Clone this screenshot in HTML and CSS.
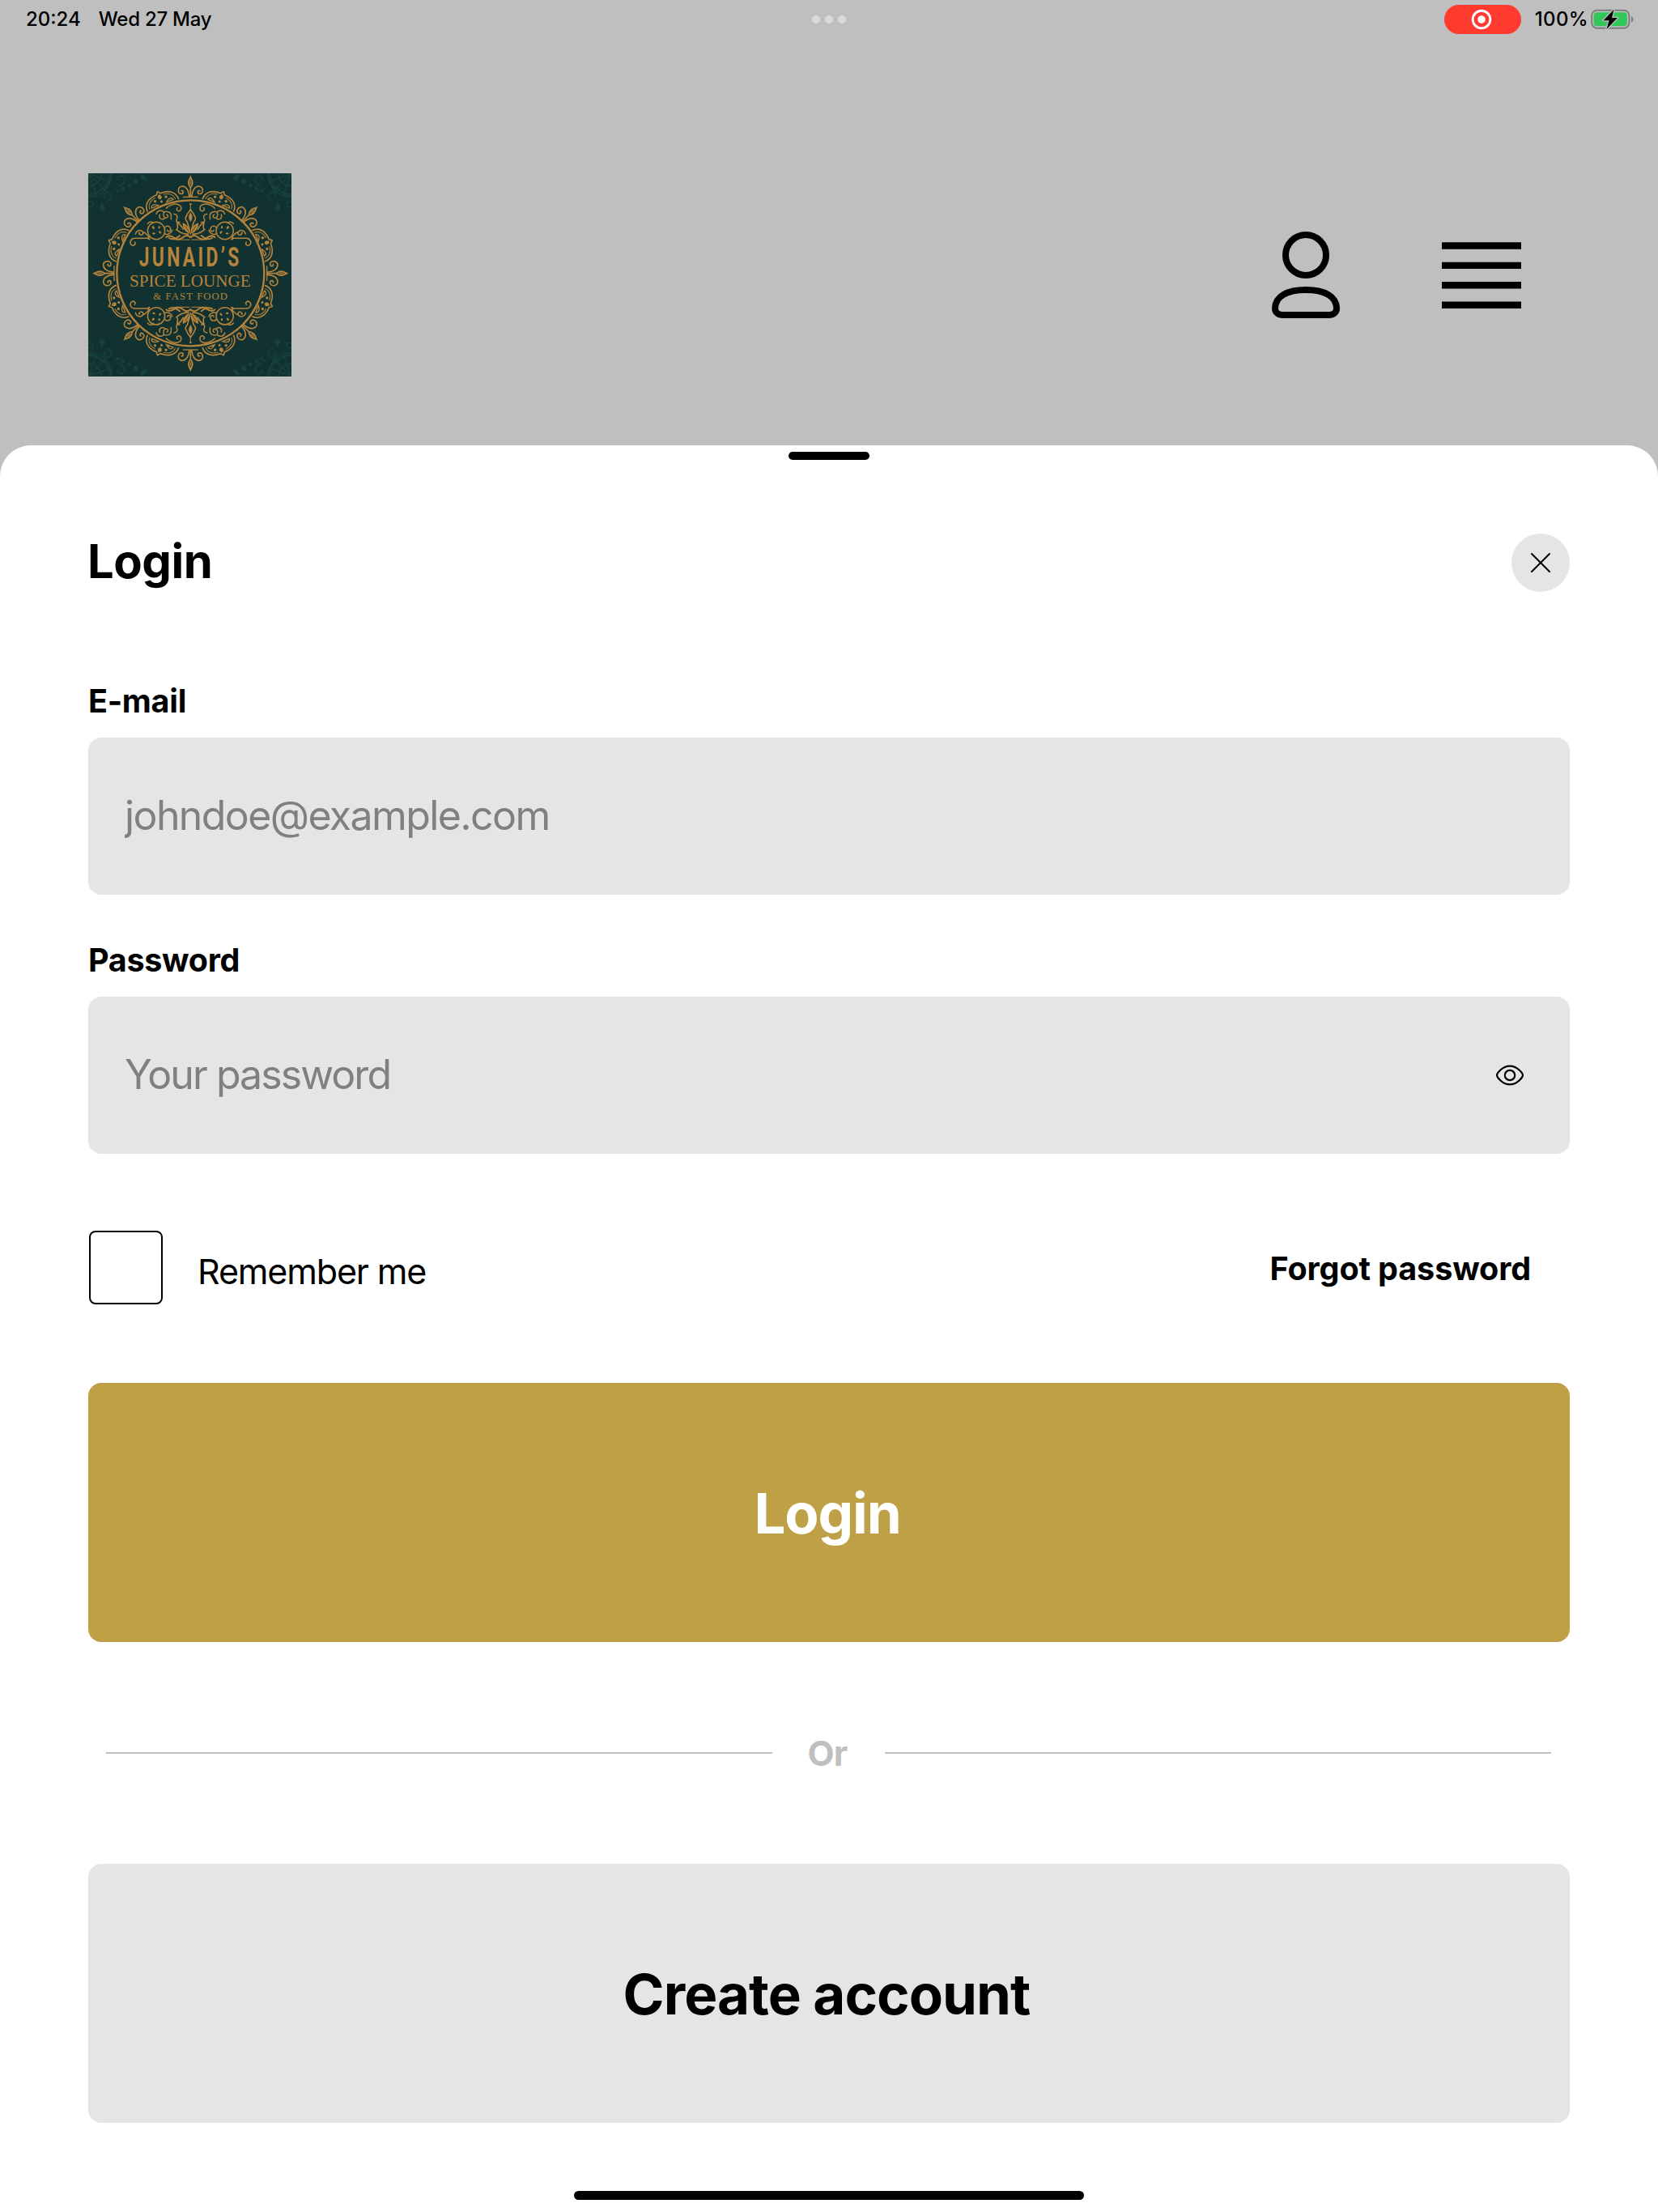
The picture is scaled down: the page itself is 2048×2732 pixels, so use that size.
FILE: index.html
```html
<!DOCTYPE html>
<html lang="en">
<head>
<meta charset="utf-8">
<title>Login</title>
<link rel="stylesheet" href="styles.css">
</head>
<body>
<div class="screen">
  <div class="status-bar">
    <div class="status-left">
      <span class="time">20:24</span>
      <span class="date">Wed 27 May</span>
    </div>
    <div class="multitask"><i></i><i></i><i></i></div>
    <div class="status-right">
      <div class="recording">
        <svg width="26" height="26" viewBox="0 0 26 26"><circle cx="13" cy="13" r="10.8" fill="none" stroke="#fff" stroke-width="2.9"/><circle cx="13" cy="13" r="4.8" fill="#fff"/></svg>
      </div>
      <span class="charge">100%</span>
      <svg class="battery" width="54" height="26" viewBox="0 0 54 26">
        <rect x="1.2" y="1.7" width="46.2" height="22" rx="6.5" fill="none" stroke="#7d7d7d" stroke-width="2"/>
        <rect x="3.7" y="4.2" width="41.2" height="17" rx="4" fill="#33c759"/>
        <path d="M50 9.2C53.4 10.2 53.4 15.4 50 16.4Z" fill="#7d7d7d"/>
        <path d="M28.5 .8L15.6 14.2H22.6L19.4 25L33 11H26Z" fill="#000" stroke="#bfbfbf" stroke-width="2.6" paint-order="stroke" stroke-linejoin="round"/>
      </svg>
    </div>
  </div>

  <header class="app-bar">
    <svg class="logo" viewBox="27 27 753 753">
      <defs>
        <g id="fleur">
          <path d="M406 34C410 46 416 52 416 62C416 72 410 78 406 86C402 78 396 72 396 62C396 52 402 46 406 34Z" fill="#b5833c"/>
          <path d="M406 50C410 58 410 66 406 75C402 66 402 58 406 50Z" fill="none" stroke="#113230" stroke-width="2"/>
          <path d="M406 84V113M401 112C400 92 391 76 376 75C364 75 358 86 362 97C366 106 379 105 379 97C379 92 375 90 372 92M411 112C412 92 421 76 436 75C448 75 454 86 450 97C446 106 433 105 433 97C433 92 437 90 440 92" fill="none" stroke="#b5833c" stroke-width="5" stroke-linecap="round"/>
          <path d="M378 115H434" stroke="#b5833c" stroke-width="4"/>
        </g>
        <g id="fan">
          <path d="M344 127C342 100 362 81 398 81L406 71L414 81C450 81 470 100 468 127" fill="none" stroke="#b5833c" stroke-width="5" stroke-linejoin="round"/>
          <path d="M355 122C354 104 368 91 390 89M457 122C458 104 444 91 422 89" fill="none" stroke="#b5833c" stroke-width="3"/>
          <path d="M406 82C416 91 416 98 406 102C396 98 396 91 406 82Z" fill="#b5833c"/>
          <circle cx="384" cy="101" r="5" fill="#b5833c"/><circle cx="428" cy="101" r="5" fill="#b5833c"/>
          <circle cx="406" cy="111" r="4.5" fill="#b5833c"/>
          <path d="M363 120C366 106 378 110 390 120ZM449 120C446 106 434 110 422 120Z" fill="none" stroke="#b5833c" stroke-width="4"/>
        </g>
        <g id="scroll" fill="none" stroke="#b5833c" stroke-width="4.5" stroke-linecap="round">
          <path d="M252 268H200C184 268 178 284 187 292C196 299 205 289 199 282"/>
          <path d="M202 252C205 238 222 234 229 244C234 253 223 260 217 252M229 244C240 247 244 256 254 264"/>
          <circle cx="279" cy="240" r="32"/>
          <path d="M247 214C254 206 264 205 268 211M252 262C246 266 248 273 255 272M311 228C316 219 330 222 332 232C334 243 322 246 320 238M310 252C322 256 336 250 338 238"/>
          <path d="M279 178C282 164 299 161 308 171C318 166 332 170 334 182V197M308 171C302 180 307 192 315 193C324 192 325 183 318 180M292 180C288 194 298 201 309 195"/>
          <path d="M316 157C327 145 346 138 361 143C375 148 374 166 362 167C354 166 353 157 358 155M345 178C355 179 360 187 355 196C351 205 358 211 366 208"/>
          <path d="M316 264C326 254 337 260 347 267C358 275 370 272 382 262C391 255 399 258 406 264M326 267C340 275 352 270 366 258" stroke-width="6"/>
          <path d="M345 273H402" stroke-width="3"/>
        </g>
        <g id="scroll-dots" fill="#b5833c">
          <ellipse cx="268" cy="228" rx="4" ry="6" transform="rotate(-35 268 228)"/><ellipse cx="290" cy="227" rx="3.5" ry="5"/><ellipse cx="293" cy="246" rx="3.5" ry="6" transform="rotate(-40 293 246)"/><ellipse cx="270" cy="250" rx="5" ry="3.5"/>
          <ellipse cx="216" cy="249" rx="3" ry="5"/>
        </g>
        <g id="crest">
          <use href="#scroll"/><use href="#scroll-dots"/>
          <g transform="translate(812 0) scale(-1 1)"><use href="#scroll"/><use href="#scroll-dots"/></g>
          <circle cx="406" cy="142" r="4" fill="#b5833c"/>
          <path d="M406 145V166" stroke="#b5833c" stroke-width="3"/>
          <path d="M406 160C409 172 420 174 420 184C428 193 424 202 418 207L406 248L394 207C388 202 384 193 392 184C392 174 403 172 406 160Z" fill="none" stroke="#b5833c" stroke-width="5"/>
          <path d="M406 172C415 184 415 194 406 208C397 194 397 184 406 172Z" fill="#b5833c"/>
          <path d="M404 250C386 247 376 230 377 211C394 217 404 230 404 250ZM408 250C426 247 436 230 435 211C418 217 408 230 408 250Z" fill="#b5833c"/>
          <path d="M400 252C380 255 366 246 354 236C362 231 358 218 356 209C369 214 374 226 380 236M412 252C432 255 446 246 458 236C450 231 454 218 456 209C443 214 438 226 432 236" fill="none" stroke="#b5833c" stroke-width="5"/>
          <path d="M386 222L401 245M426 222L411 245M406 214V247" stroke="#113230" stroke-width="2"/>
        </g>
        <g id="corner" fill="none" stroke="#17433f" stroke-width="4">
          <circle cx="27" cy="27" r="88"/><circle cx="27" cy="27" r="78"/><circle cx="27" cy="27" r="48"/>
          <path d="M27 27L96 96M27 27L107 58M27 27L58 107M110 27C111 57 99 79 76 88C58 98 45 110 27 112"/>
          <path d="M138 75C158 71 168 56 159 43C149 30 131 40 137 52M94 130C116 128 118 103 101 98C85 96 78 113 91 117M122 84C140 98 154 92 157 80"/>
          <path d="M27 135C40 127 49 139 43 148C38 156 29 151 27 147"/>
          <g fill="#17433f" stroke="none"><ellipse cx="231" cy="42" rx="14" ry="7" transform="rotate(45 231 42)"/><circle cx="203" cy="57" r="9"/><circle cx="179" cy="72" r="7"/><circle cx="157" cy="83" r="6"/><circle cx="136" cy="93" r="5"/><path d="M76 132C80 145 89 149 88 157C86 169 70 169 69 157C69 149 75 145 76 132Z"/></g>
        </g>
      </defs>
      <rect x="27" y="27" width="753" height="753" fill="#113230"/>
      <use href="#corner"/>
      <use href="#corner" transform="translate(807 0) scale(-1 1)"/>
      <use href="#corner" transform="translate(0 807) scale(1 -1)"/>
      <use href="#corner" transform="translate(807 807) scale(-1 -1)"/>
      <ellipse cx="406" cy="397" rx="273" ry="270" fill="none" stroke="#b5833c" stroke-width="7"/>
      <use href="#fleur"/>
      <use href="#fleur" transform="rotate(45 406 398) translate(0 12)"/>
      <use href="#fleur" transform="rotate(90 406 398)"/>
      <use href="#fleur" transform="rotate(135 406 398) translate(0 12)"/>
      <use href="#fleur" transform="rotate(180 406 398)"/>
      <use href="#fleur" transform="rotate(225 406 398) translate(0 12)"/>
      <use href="#fleur" transform="rotate(270 406 398)"/>
      <use href="#fleur" transform="rotate(315 406 398) translate(0 12)"/>
      <use href="#fan" transform="rotate(22 406 398)"/>
      <use href="#fan" transform="rotate(68 406 398)"/>
      <use href="#fan" transform="rotate(112 406 398)"/>
      <use href="#fan" transform="rotate(158 406 398)"/>
      <use href="#fan" transform="rotate(202 406 398)"/>
      <use href="#fan" transform="rotate(248 406 398)"/>
      <use href="#fan" transform="rotate(292 406 398)"/>
      <use href="#fan" transform="rotate(338 406 398)"/>
      <use href="#crest"/>
      <use href="#crest" transform="translate(0 796) scale(1 -1)"/>
      <text class="brand-name" transform="translate(215 373) scale(.7 1)" textLength="530" lengthAdjust="spacing">JUNAID’S</text>
      <text class="brand-line" x="180" y="448" textLength="449" lengthAdjust="spacingAndGlyphs">SPICE LOUNGE</text>
      <text class="brand-sub" x="268" y="495" textLength="275" lengthAdjust="spacing">&amp; FAST FOOD</text>
    </svg>
    <div class="app-actions">
      <svg class="icon-user" width="84" height="108" viewBox="0 0 84 108" fill="none" stroke="#000" stroke-width="8">
        <circle cx="42" cy="29" r="25"/>
        <path d="M42 72C65 72 80 80 80 95C80 99.500 76 103 70.500 103H13.500C8 103 4 99.500 4 95C4 80 19 72 42 72Z"/>
      </svg>
      <svg class="icon-menu" width="98" height="83" viewBox="0 0 98 83"><path d="M0 .3h98v8.400H0zM0 24.700h98v8.400H0zM0 49.100h98v8.400H0zM0 73.500h98v8.400H0z" fill="#000"/></svg>
    </div>
  </header>

  <main class="sheet">
    <div class="grabber"></div>
    <div class="sheet-head">
      <h1>Login</h1>
      <button class="close" type="button" aria-label="Close">
        <svg width="26" height="26" viewBox="0 0 26 26"><path d="M2 2L24 24M24 2L2 24" stroke="#000" stroke-width="2" stroke-linecap="round"/></svg>
      </button>
    </div>

    <form class="form">
      <label class="label" for="email">E-mail</label>
      <div class="field"><input class="email" id="email" type="text" placeholder="johndoe@example.com"></div>

      <label class="label label-password" for="password">Password</label>
      <div class="field">
        <input class="password" id="password" type="password" placeholder="Your password">
        <svg class="eye" width="36" height="28" viewBox="0 0 36 28" fill="none" stroke="#000" stroke-width="2.200">
          <path d="M2 14C2 12 8.500 2.600 18 2.600S34 12 34 14S27.500 25.400 18 25.400S2 16 2 14Z"/>
          <circle cx="18" cy="14" r="6.200"/>
        </svg>
      </div>

      <div class="options">
        <label class="remember"><span class="checkbox"></span><span class="remember-text">Remember me</span></label>
        <a class="forgot">Forgot password</a>
      </div>

      <button class="btn btn-login" type="button">Login</button>
      <div class="divider"><span>Or</span></div>
      <button class="btn btn-create" type="button">Create account</button>
    </form>
    <div class="home-indicator"></div>
  </main>
</div>
</body>
</html>
```
FILE: styles.css
```css
* { box-sizing: border-box; }

body {
  margin: 0;
  background: #bfbfbf;
  color: #000;
  font-family: Inter, "Liberation Sans", sans-serif;
}

.screen {
  width: 2048px;
  height: 2732px;
  display: flex;
  flex-direction: column;
  overflow: hidden;
}

/* Status bar */
.status-bar {
  height: 48px;
  display: grid;
  grid-template-columns: 1fr auto 1fr;
  align-items: center;
  padding: 0 29px 0 32px;
  font-size: 24px;
  font-weight: 500;
  line-height: 30px;
}
.status-left { display: flex; gap: 22px; padding-bottom: 1px; }
.date { letter-spacing: -0.25px; }
.multitask { display: flex; gap: 6px; padding-right: 3px; }
.multitask i { width: 10px; height: 10px; border-radius: 50%; background: #d9d9d9; }
.status-right { display: flex; align-items: center; justify-content: flex-end; }
.recording {
  width: 95px;
  height: 36px;
  border-radius: 18px;
  background: #ff3b30;
  display: flex;
  align-items: center;
  justify-content: center;
  margin-right: 17px;
}
.recording svg { margin-right: 2px; }
.charge { letter-spacing: 0.35px; padding-bottom: 1px; }
.battery { margin-left: 3px; margin-top: -1px; }

/* App bar behind the sheet */
.app-bar {
  height: 502px;
  flex: none;
  display: flex;
  justify-content: space-between;
  align-items: flex-start;
  padding: 166px 169px 0 109px;
}
.logo { width: 251px; height: 251px; display: block; }
.brand-name { font: 700 98px Roboto, sans-serif; fill: #b5833c; }
.brand-line { font: 400 66px "Liberation Serif", serif; fill: #b5833c; }
.brand-sub { font: 400 38px "Liberation Serif", serif; fill: #b5833c; }
.app-actions { display: flex; align-items: flex-start; gap: 126px; padding-top: 72px; }
.icon-menu { margin-top: 13px; }

/* Bottom sheet */
.sheet {
  flex: 1;
  display: flex;
  flex-direction: column;
  padding: 8px 109px 15px;
  background: #fff;
  border-radius: 38px 38px 0 0;
}
.grabber { width: 100px; height: 10px; border-radius: 5px; background: #000; align-self: center; }
.sheet-head {
  display: flex;
  justify-content: space-between;
  align-items: center;
  margin-top: 91px;
  height: 72px;
}
h1 {
  margin: 0 0 0 -1px;
  padding-bottom: 4px;
  font-size: 58px;
  font-weight: 700;
  line-height: 68px;
  letter-spacing: -0.5px;
}
.close {
  width: 72px;
  height: 72px;
  padding: 0;
  border: 0;
  border-radius: 50%;
  background: #e5e5e5;
  display: flex;
  align-items: center;
  justify-content: center;
}

.form { display: flex; flex-direction: column; margin-top: 111px; }
.label {
  height: 48px;
  line-height: 48px;
  margin-bottom: 21px;
  font-size: 39.5px;
  font-weight: 700;
  letter-spacing: -0.3px;
}
.label-password { margin-top: 57px; }
.field {
  height: 194px;
  display: flex;
  align-items: center;
  padding: 0 56px 0 45px;
  border-radius: 16px;
  background: #e5e5e5;
}
.field input {
  flex: 1;
  height: 100%;
  padding: 0 0 2px;
  border: 0;
  outline: 0;
  background: none;
  font: 400 50px Inter, sans-serif;
}
.field input::placeholder { color: #808080; opacity: 1; }
.field .email { letter-spacing: -1.6px; }
.field .password { letter-spacing: -1.92px; }

.options {
  display: flex;
  align-items: center;
  justify-content: space-between;
  height: 91px;
  margin-top: 95px;
  padding: 0 48px 0 1px;
}
.remember { display: flex; align-items: center; gap: 43px; }
.checkbox { width: 91px; height: 91px; border: 2px solid #000; border-radius: 8px; }
.remember-text { padding-top: 9px; font-size: 43px; line-height: 52px; letter-spacing: -1.15px; }
.forgot { padding-top: 2px; font-size: 39.5px; line-height: 48px; font-weight: 700; letter-spacing: -0.11px; }

.btn {
  height: 320px;
  border: 0;
  border-radius: 16px;
  font: 700 69px/84px Inter, sans-serif;
}
.btn-login {
  margin-top: 97px;
  padding: 1px 4px 0 0;
  background: #bea147;
  color: #fff;
  letter-spacing: -1.08px;
}
.btn-create {
  padding: 2px 6px 0 0;
  background: #e5e5e5;
  color: #000;
  letter-spacing: -0.95px;
}
.divider {
  display: flex;
  align-items: center;
  height: 274px;
  padding: 0 23px 0 22px;
}
.divider::before, .divider::after { content: ""; flex: 1; height: 2px; background: #bfbfbf; }
.divider span {
  width: 139px;
  padding: 0 3px 1px 0;
  text-align: center;
  color: #bfbfbf;
  font-size: 43px;
  font-weight: 700;
  letter-spacing: -0.93px;
}

.home-indicator {
  width: 630px;
  height: 11px;
  border-radius: 6px;
  background: #000;
  align-self: center;
  margin-top: auto;
}
```
